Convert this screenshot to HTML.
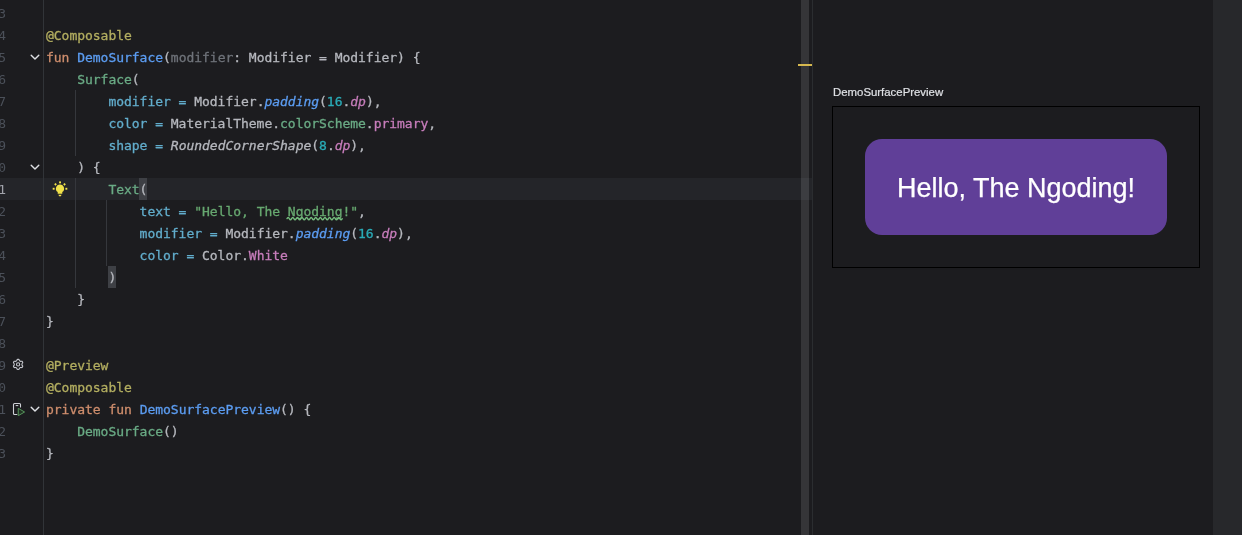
<!DOCTYPE html>
<html lang="en"><head><meta charset="utf-8"><title>DemoSurface</title>
<style>
html,body{margin:0;padding:0;background:#1C1C1F;}
body{width:1242px;height:535px;position:relative;overflow:hidden;font-family:"DejaVu Sans Mono","Liberation Mono",monospace;}
.ed{position:absolute;left:0;top:0;width:812px;height:535px;overflow:hidden;}
.caret{position:absolute;left:0;top:178px;width:812px;height:22px;background:#242529;}
.gl{position:absolute;left:43px;top:0;width:1px;height:535px;background:#313438;}
.txt{position:absolute;left:0;top:0;width:812px;height:535px;will-change:transform;}
.ln{position:absolute;left:-39px;width:45px;height:22px;line-height:22px;padding-top:1px;text-align:right;font-size:13px;color:#4B5059;white-space:pre;}
.ln.cur{color:#A1A3AB;}
.cl{-webkit-text-stroke:0.3px;position:absolute;left:46px;height:22px;line-height:22px;padding-top:1px;font-size:13px;color:#B6B8BE;white-space:pre;letter-spacing:-0.026px;}
.ig{position:absolute;width:1px;background:#35373C;}
.brh{position:absolute;width:8px;height:22px;background:#3E4045;}
.sb{position:absolute;left:801px;top:0;width:8px;height:535px;background:rgba(255,255,255,0.115);}
.sep{position:absolute;left:812px;top:0;width:1px;height:535px;background:#2B2D30;}
.mark{position:absolute;left:798px;top:64px;width:14px;height:2px;background:#D6B84F;}
.strip{position:absolute;left:1213px;top:0;width:29px;height:535px;background:#27282B;}
.lbl{position:absolute;left:833px;top:84px;height:16px;line-height:16px;font-family:"Liberation Sans",sans-serif;font-size:11.4px;color:#DFE1E5;white-space:pre;will-change:transform;-webkit-text-stroke:0.2px;}
.box{position:absolute;left:832px;top:106px;width:366px;height:160px;border:1px solid #000;}
.pur{position:absolute;left:865px;top:138.5px;width:302px;height:96.5px;border-radius:17px;background:#603F98;}
.hello{will-change:transform;-webkit-text-stroke:0.25px #fff;position:absolute;left:865px;top:171px;width:302px;height:34px;line-height:34px;text-align:center;font-family:"Liberation Sans",sans-serif;font-size:27px;color:#fff;white-space:pre;}
.ic{position:absolute;overflow:visible;}
</style></head><body>
<div class="ed">
<div class="caret"></div>
<div class="gl"></div>
<div class="brh" style="left:139px;top:178px"></div>
<div class="brh" style="left:108px;top:266px"></div>

<div class="ig" style="left:75px;top:90px;height:66px"></div>
<div class="ig" style="left:75px;top:178px;height:110px"></div>
<div class="ig" style="left:106px;top:200px;height:66px"></div>
<div class="txt">
<div class="ln" style="top:2px">3</div>
<div class="ln" style="top:24px">4</div>
<div class="ln" style="top:46px">5</div>
<div class="ln" style="top:68px">6</div>
<div class="ln" style="top:90px">7</div>
<div class="ln" style="top:112px">8</div>
<div class="ln" style="top:134px">9</div>
<div class="ln" style="top:156px">10</div>
<div class="ln cur" style="top:178px">11</div>
<div class="ln" style="top:200px">12</div>
<div class="ln" style="top:222px">13</div>
<div class="ln" style="top:244px">14</div>
<div class="ln" style="top:266px">15</div>
<div class="ln" style="top:288px">16</div>
<div class="ln" style="top:310px">17</div>
<div class="ln" style="top:332px">18</div>
<div class="ln" style="top:354px">19</div>
<div class="ln" style="top:376px">20</div>
<div class="ln" style="top:398px">21</div>
<div class="ln" style="top:420px">22</div>
<div class="ln" style="top:442px">23</div>
<div class="cl" style="top:24px"><span style="color:#B3AE60">@Composable</span></div>
<div class="cl" style="top:46px"><span style="color:#CF8E6D">fun</span> <span style="color:#5C9DF2">DemoSurface</span>(<span style="color:#6F737A">modifier</span>: Modifier = Modifier) {</div>
<div class="cl" style="top:68px">    <span style="color:#6AAB85">Surface</span>(</div>
<div class="cl" style="top:90px">        <span style="color:#62ADCC">modifier =</span> Modifier.<span style="color:#5C9DF2;font-style:italic">padding</span>(<span style="color:#2AACB8">16</span>.<span style="color:#C77DBB;font-style:italic">dp</span>),</div>
<div class="cl" style="top:112px">        <span style="color:#62ADCC">color =</span> MaterialTheme.<span style="color:#6AAB85">colorScheme</span>.<span style="color:#C77DBB">primary</span>,</div>
<div class="cl" style="top:134px">        <span style="color:#62ADCC">shape =</span> <span style="font-style:italic">RoundedCornerShape</span>(<span style="color:#2AACB8">8</span>.<span style="color:#C77DBB;font-style:italic">dp</span>),</div>
<div class="cl" style="top:156px">    ) {</div>
<div class="cl" style="top:178px">        <span style="color:#6AAB85">Text</span>(</div>
<div class="cl" style="top:200px">            <span style="color:#62ADCC">text =</span> <span style="color:#67A870">&quot;Hello, The Ngoding!&quot;</span>,</div>
<div class="cl" style="top:222px">            <span style="color:#62ADCC">modifier =</span> Modifier.<span style="color:#5C9DF2;font-style:italic">padding</span>(<span style="color:#2AACB8">16</span>.<span style="color:#C77DBB;font-style:italic">dp</span>),</div>
<div class="cl" style="top:244px">            <span style="color:#62ADCC">color =</span> Color.<span style="color:#C77DBB">White</span></div>
<div class="cl" style="top:266px">        )</div>
<div class="cl" style="top:288px">    }</div>
<div class="cl" style="top:310px">}</div>
<div class="cl" style="top:354px"><span style="color:#B3AE60">@Preview</span></div>
<div class="cl" style="top:376px"><span style="color:#B3AE60">@Composable</span></div>
<div class="cl" style="top:398px"><span style="color:#CF8E6D">private</span> <span style="color:#CF8E6D">fun</span> <span style="color:#5C9DF2">DemoSurfacePreview</span>() {</div>
<div class="cl" style="top:420px">    <span style="color:#6AAB85">DemoSurface</span>()</div>
<div class="cl" style="top:442px">}</div>
</div>
<svg class="ic" style="left:0;top:0" width="812" height="535" viewBox="0 0 812 535"><path d="M287 218.6 Q288.15 216.30 289.30 218.6 Q290.45 220.90 291.60 218.6 Q292.75 216.30 293.90 218.6 Q295.05 220.90 296.20 218.6 Q297.35 216.30 298.50 218.6 Q299.65 220.90 300.80 218.6 Q301.95 216.30 303.10 218.6 Q304.25 220.90 305.40 218.6 Q306.55 216.30 307.70 218.6 Q308.85 220.90 310.00 218.6 Q311.15 216.30 312.30 218.6 Q313.45 220.90 314.60 218.6 Q315.75 216.30 316.90 218.6 Q318.05 220.90 319.20 218.6 Q320.35 216.30 321.50 218.6 Q322.65 220.90 323.80 218.6 Q324.95 216.30 326.10 218.6 Q327.25 220.90 328.40 218.6 Q329.55 216.30 330.70 218.6 Q331.85 220.90 333.00 218.6 Q334.15 216.30 335.30 218.6 Q336.45 220.90 337.60 218.6 Q338.75 216.30 339.90 218.6 Q341.05 220.90 342.20 218.6" fill="none" stroke="#74BC7D" stroke-width="1.35" stroke-linejoin="round" stroke-linecap="round"/></svg>
</div>
<svg class="ic" style="left:27px;top:49px" width="16" height="16" viewBox="0 0 16 16"><path d="M4.2 6.2 L8 10.1 L11.8 6.2" fill="none" stroke="#DFE1E5" stroke-width="1.4" stroke-linecap="round" stroke-linejoin="round"/></svg>
<svg class="ic" style="left:27px;top:159px" width="16" height="16" viewBox="0 0 16 16"><path d="M4.2 6.2 L8 10.1 L11.8 6.2" fill="none" stroke="#DFE1E5" stroke-width="1.4" stroke-linecap="round" stroke-linejoin="round"/></svg>
<svg class="ic" style="left:27px;top:401px" width="16" height="16" viewBox="0 0 16 16"><path d="M4.2 6.2 L8 10.1 L11.8 6.2" fill="none" stroke="#DFE1E5" stroke-width="1.4" stroke-linecap="round" stroke-linejoin="round"/></svg>
<svg class="ic" style="left:51px;top:180px" width="18" height="18" viewBox="0 0 18 18"><g fill="#F0E14A"><rect x="8.1" y="1.4" width="1.9" height="1.9"/><rect x="3.55" y="3.35" width="1.9" height="1.9" transform="rotate(45 4.5 4.3)"/><rect x="12.55" y="3.35" width="1.9" height="1.9" transform="rotate(45 13.5 4.3)"/><rect x="1.7" y="7.8" width="1.9" height="1.9"/><rect x="14.4" y="7.8" width="1.9" height="1.9"/><path d="M9 4.600a4.100 4.100 0 0 0-2.300 7.500v1.700h4.600v-1.700A4.100 4.100 0 0 0 9 4.600z"/><path d="M7.400 14.800h3.200l-.8 1.500h-1.600z"/></g></svg>
<svg class="ic" style="left:0;top:0" width="44" height="535" viewBox="0 0 44 535"><g fill="none" stroke="#C4C6CC" stroke-width="1.1" stroke-linejoin="round"><path d="M18.10 359.35 L18.54 359.38 L18.96 359.53 L19.25 360.10 L19.45 360.68 L19.73 360.90 L20.03 361.07 L20.31 361.24 L20.64 361.37 L21.25 361.25 L21.89 361.22 L22.23 361.51 L22.47 361.88 L22.67 362.27 L22.74 362.71 L22.40 363.25 L22.00 363.71 L21.95 364.06 L21.95 364.40 L21.95 364.74 L22.00 365.09 L22.40 365.55 L22.74 366.09 L22.67 366.53 L22.47 366.92 L22.23 367.29 L21.89 367.58 L21.25 367.55 L20.64 367.43 L20.31 367.56 L20.03 367.73 L19.73 367.90 L19.45 368.12 L19.25 368.70 L18.96 369.27 L18.54 369.42 L18.10 369.45 L17.66 369.42 L17.24 369.27 L16.95 368.70 L16.75 368.12 L16.47 367.90 L16.18 367.73 L15.89 367.56 L15.56 367.43 L14.95 367.55 L14.31 367.58 L13.97 367.29 L13.73 366.92 L13.53 366.53 L13.46 366.09 L13.80 365.55 L14.20 365.09 L14.25 364.74 L14.25 364.40 L14.25 364.06 L14.20 363.71 L13.80 363.25 L13.46 362.71 L13.53 362.27 L13.73 361.88 L13.97 361.51 L14.31 361.22 L14.95 361.25 L15.56 361.37 L15.89 361.24 L16.18 361.07 L16.47 360.90 L16.75 360.68 L16.95 360.10 L17.24 359.53 L17.66 359.38Z"/><circle cx="18.1" cy="364.4" r="1.6"/></g></svg>
<svg class="ic" style="left:0;top:0" width="44" height="535" viewBox="0 0 44 535"><g fill="none" stroke-linecap="round" stroke-linejoin="round"><path d="M20.500 407V404.500a1 1 0 0 0-1-1h-5a1 1 0 0 0-1 1v9a1 1 0 0 0 1 1h2.400" stroke="#CED0D6" stroke-width="1.100"/><path d="M16.100 405.600h1.800" stroke="#CED0D6" stroke-width="1"/><path d="M18.600 408.500L24.600 412L18.600 415.500Z" stroke="#57965C" stroke-width="1" fill="#223324"/></g></svg>
<div class="sb"></div><div class="sep"></div><div class="mark"></div>
<div class="strip"></div>
<div class="lbl">DemoSurfacePreview</div>
<div class="box"></div>
<div class="pur"></div>
<div class="hello">Hello, The Ngoding!</div>
</body></html>
